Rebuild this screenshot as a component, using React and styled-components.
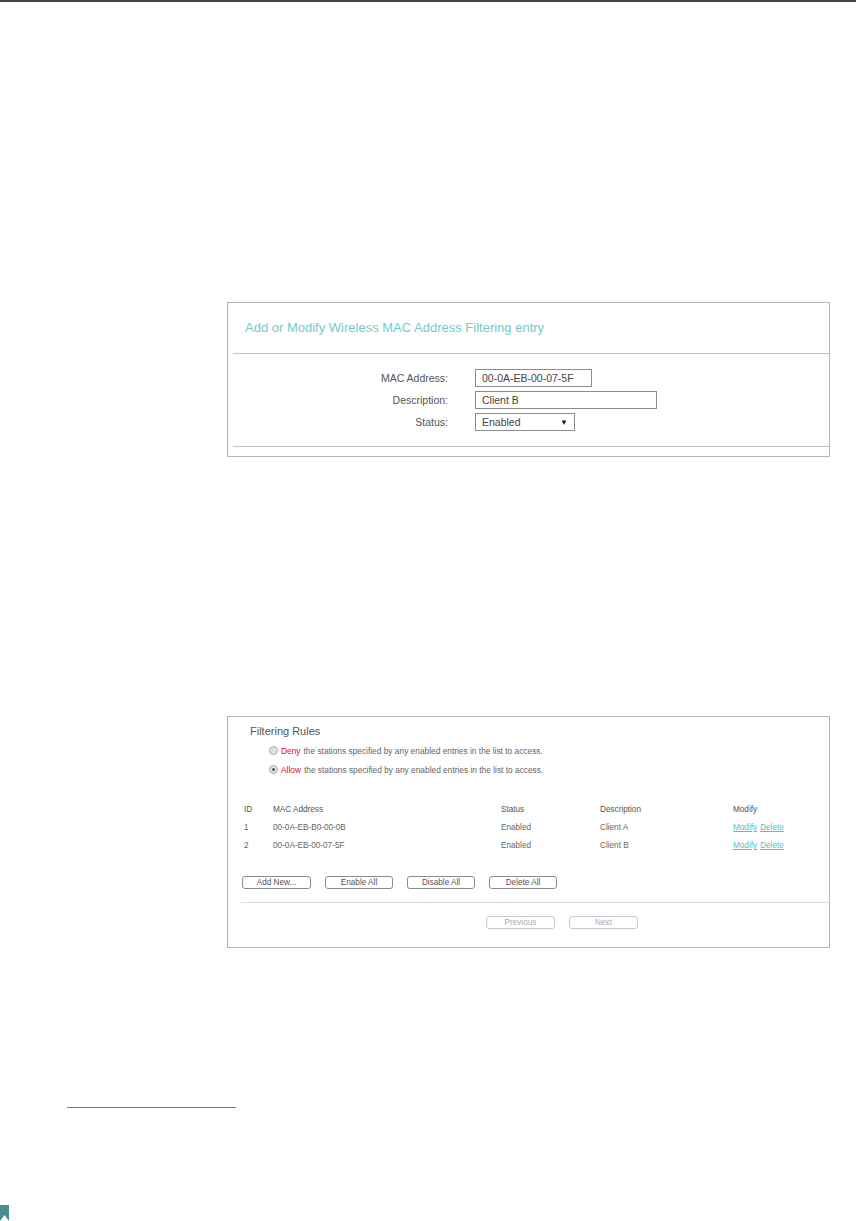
import React from 'react';
import styled, { createGlobalStyle } from 'styled-components';

const GlobalStyle = createGlobalStyle`
  html, body {
    margin: 0;
    padding: 0;
    background: #fff;
    font-family: "Liberation Sans", Arial, sans-serif;
  }
`;

const Page = styled.div`
  width: 856px;
  height: 1221px;
  display: flex;
  flex-direction: column;
  border-top: 2px solid #444;
  box-sizing: border-box;
  overflow: hidden;
`;

const Panel = styled.section`
  margin-left: 227px;
  margin-top: ${(p) => p.top}px;
  width: 603px;
  height: ${(p) => p.h}px;
  border: 1px solid #b4b4b4;
  box-sizing: border-box;
  display: flex;
  flex-direction: column;
`;

const PanelHead = styled.div`
  margin-left: 5px;
  height: 50px;
  line-height: 50px;
  padding-left: 12px;
  border-bottom: 1px solid #c4c4c4;
  color: #6fcccc;
  font-size: 13px;
`;

const Form = styled.div`
  display: flex;
  flex-direction: column;
  gap: 4px;
  padding: 15px 0 15px;
  margin-left: 5px;
  border-bottom: 1px solid #c4c4c4;
`;

const FormRow = styled.div`
  display: flex;
  align-items: center;
  height: 18px;
`;

const Label = styled.div`
  width: 215px;
  text-align: right;
  font-size: 10.5px;
  color: #555;
  margin-right: 27px;
`;

const Field = styled.div`
  width: ${(p) => p.w}px;
  height: 18px;
  box-sizing: border-box;
  border: 1px solid #8c8c8c;
  font-size: 10.5px;
  color: #444;
  padding: 0 6px;
  display: flex;
  align-items: center;
  justify-content: space-between;
`;

const Arrow = styled.span`
  font-size: 8px;
  color: #222;
`;

const RulesTitle = styled.div`
  margin: 7px 0 0 22px;
  font-size: 11px;
  line-height: 14px;
  color: #555;
`;

const Radios = styled.div`
  display: flex;
  flex-direction: column;
  gap: 7px;
  margin: 7px 0 0 41px;
`;

const RadioRow = styled.div`
  display: flex;
  align-items: center;
  height: 12px;
  font-size: 8.35px;
  color: #666;
`;

const Radio = styled.span`
  width: 7px;
  height: 7px;
  border-radius: 50%;
  border: 1px solid #aaa;
  background: #e2e2e2;
  margin-right: 3px;
  display: flex;
  align-items: center;
  justify-content: center;
  &::after {
    content: '';
    width: 3px;
    height: 3px;
    border-radius: 50%;
    background: ${(p) => (p.checked ? '#555' : 'transparent')};
  }
`;

const Red = styled.span`
  color: #e8003d;
  margin-right: 3px;
`;

const Table = styled.div`
  margin: 25px 0 0 16px;
  display: flex;
  flex-direction: column;
`;

const TRow = styled.div`
  display: grid;
  grid-template-columns: 29px 228px 99px 133px 1fr;
  height: 18px;
  align-items: center;
  font-size: 8.2px;
  color: ${(p) => (p.head ? '#555' : '#666')};
`;

const Link = styled.a`
  color: #4ec3c3;
  text-decoration: underline;
  margin-right: 3px;
`;

const Buttons = styled.div`
  display: flex;
  gap: ${(p) => p.gap}px;
  margin: ${(p) => p.m};
`;

const Btn = styled.div`
  width: ${(p) => p.w}px;
  height: 13px;
  box-sizing: border-box;
  border: 1px solid ${(p) => (p.disabled ? '#c8c8c8' : '#8c8c8c')};
  border-radius: 3px;
  font-size: 8.2px;
  color: ${(p) => (p.disabled ? '#aaa' : '#555')};
  display: flex;
  align-items: center;
  justify-content: center;
`;

const Divider = styled.div`
  margin: ${(p) => p.m};
  border-top: 1px solid #dcdcdc;
`;

const Footnote = styled.div`
  margin: 159px 0 0 67px;
  width: 169px;
  border-top: 1px solid #3f8a8a;
`;

const Marker = styled.svg`
  margin-top: 97px;
  display: block;
`;

const rules = [
  { id: 1, mac: '00-0A-EB-B0-00-0B', desc: 'Client A' },
  { id: 2, mac: '00-0A-EB-00-07-5F', desc: 'Client B' },
];

export default function App() {
  return (
    <Page>
      <GlobalStyle />
      <Panel top={300} h={155}>
        <PanelHead>Add or Modify Wireless MAC Address Filtering entry</PanelHead>
        <Form>
          <FormRow>
            <Label>MAC Address:</Label>
            <Field w={117}>00-0A-EB-00-07-5F</Field>
          </FormRow>
          <FormRow>
            <Label>Description:</Label>
            <Field w={182}>Client B</Field>
          </FormRow>
          <FormRow>
            <Label>Status:</Label>
            <Field w={100}>
              Enabled <Arrow>▼</Arrow>
            </Field>
          </FormRow>
        </Form>
      </Panel>

      <Panel top={259} h={233}>
        <RulesTitle>Filtering Rules</RulesTitle>
        <Radios>
          <RadioRow>
            <Radio />
            <Red>Deny</Red> the stations specified by any enabled entries in the list to access.
          </RadioRow>
          <RadioRow>
            <Radio checked />
            <Red>Allow</Red> the stations specified by any enabled entries in the list to access.
          </RadioRow>
        </Radios>
        <Table>
          <TRow head>
            <span>ID</span>
            <span>MAC Address</span>
            <span>Status</span>
            <span>Description</span>
            <span>Modify</span>
          </TRow>
          {rules.map((r) => (
            <TRow key={r.id}>
              <span>{r.id}</span>
              <span>{r.mac}</span>
              <span>Enabled</span>
              <span>{r.desc}</span>
              <span>
                <Link>Modify</Link>
                <Link>Delete</Link>
              </span>
            </TRow>
          ))}
        </Table>
        <Buttons gap={14} m="21px 0 0 14px">
          <Btn w={69}>Add New...</Btn>
          <Btn w={68}>Enable All</Btn>
          <Btn w={68}>Disable All</Btn>
          <Btn w={68}>Delete All</Btn>
        </Buttons>
        <Divider m="13px 0 0 13px" />
        <Buttons gap={14} m="13px 0 0 258px">
          <Btn w={69} disabled>Previous</Btn>
          <Btn w={69} disabled>Next</Btn>
        </Buttons>
      </Panel>

      <Footnote />
      <Marker width="9" height="16" viewBox="0 0 9 16">
        <path d="M0 0H9V16L4.5 10L0 16Z" fill="#4a8d97" />
      </Marker>
    </Page>
  );
}
